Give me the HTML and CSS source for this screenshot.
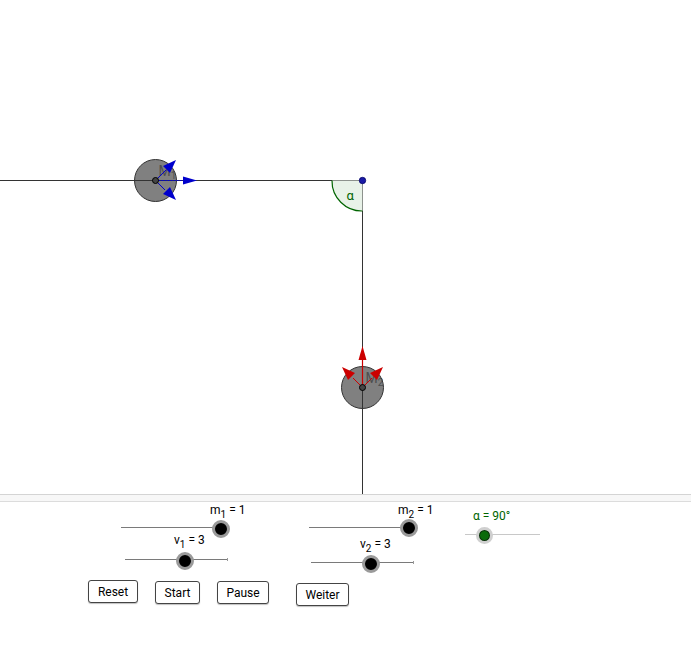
FILE: index.html
```html
<!DOCTYPE html>
<html>
<head>
<meta charset="utf-8">
<link rel="stylesheet" href="styles.css">
</head>
<body>
<div class="applet">
  <svg class="canvas" width="691" height="494" viewBox="0 0 691 494">
    <!-- lines -->
    <line x1="0" y1="180.5" x2="362" y2="180.5" stroke="#333" stroke-width="1"/>
    <line x1="362.5" y1="180" x2="362.5" y2="494" stroke="#333" stroke-width="1"/>
    <!-- angle -->
    <path d="M332,180.5 A30,30 0 0 0 362.5,211 L362.5,180.5 Z" fill="#e8f2e8" stroke="none"/>
    <path d="M332,180.5 A30,30 0 0 0 362.5,211" fill="none" stroke="#006400" stroke-width="1.2"/>
    <text x="346.5" y="200" class="alpha-lbl">α</text>
    <!-- ball M1 -->
    <circle cx="155.5" cy="180.5" r="21" fill="#808080" stroke="#333" stroke-width="1"/>
    <line x1="0" y1="180.5" x2="176" y2="180.5" stroke="#333" stroke-width="1"/>
    <text x="158.5" y="176" class="mlbl">M<tspan dy="3" font-size="10">1</tspan></text>
    <!-- blue vectors -->
    <line x1="155.5" y1="180.5" x2="186" y2="180.5" stroke="#0000cc" stroke-width="1.2" stroke-dasharray="2,1"/>
    <polygon points="197,180.5 183,176.5 183,184.5" fill="#0000cc"/>
    <line x1="155.5" y1="180.5" x2="166" y2="170" stroke="#0000cc" stroke-width="1"/>
    <polygon points="176,160 163,166 170,173" fill="#0000cc"/>
    <line x1="155.5" y1="180.5" x2="165" y2="190" stroke="#0000cc" stroke-width="1"/>
    <polygon points="176,200 163,194 170,187" fill="#0000cc"/>
    <circle cx="155.5" cy="180.5" r="3" fill="#444" stroke="#000" stroke-width="1"/>
    <!-- ball M2 -->
    <circle cx="362.5" cy="387.5" r="21" fill="#808080" stroke="#333" stroke-width="1"/>
    <line x1="362.5" y1="346" x2="362.5" y2="494" stroke="#333" stroke-width="1"/>
    <text x="365.5" y="383" class="mlbl">M<tspan dy="3" font-size="10">2</tspan></text>
    <!-- red vectors -->
    <line x1="362.5" y1="387.5" x2="362.5" y2="358" stroke="#cc0000" stroke-width="1.2"/>
    <polygon points="362.5,346 358.5,360 366.5,360" fill="#cc0000"/>
    <line x1="362.5" y1="387.5" x2="353" y2="378" stroke="#cc0000" stroke-width="1"/>
    <polygon points="342,367 348,380 355,373" fill="#cc0000"/>
    <line x1="362.5" y1="387.5" x2="372" y2="378" stroke="#cc0000" stroke-width="1"/>
    <polygon points="383,367 377,380 370,373" fill="#cc0000"/>
    <circle cx="362.5" cy="387.5" r="3" fill="#444" stroke="#000" stroke-width="1"/>
    <!-- point -->
    <circle cx="362.5" cy="180.5" r="3.2" fill="#1a1aa6" stroke="#000066" stroke-width="0.8"/>
  </svg>
  <div class="separator"></div>
  <div class="panel">
    <div class="slider s-m1">
      <span class="lbl">m<sub>1</sub> = 1</span>
      <div class="track"></div>
      <div class="knob"></div>
    </div>
    <div class="slider s-v1">
      <span class="lbl">v<sub>1</sub> = 3</span>
      <div class="track tick"></div>
      <div class="knob"></div>
    </div>
    <div class="slider s-m2">
      <span class="lbl">m<sub>2</sub> = 1</span>
      <div class="track"></div>
      <div class="knob"></div>
    </div>
    <div class="slider s-v2">
      <span class="lbl">v<sub>2</sub> = 3</span>
      <div class="track tick"></div>
      <div class="knob"></div>
    </div>
    <div class="slider s-a">
      <span class="lbl green">α = 90°</span>
      <div class="track light"></div>
      <div class="knob gknob"></div>
    </div>
    <button class="btn b-reset">Reset</button>
    <button class="btn b-start">Start</button>
    <button class="btn b-pause">Pause</button>
    <button class="btn b-weiter">Weiter</button>
  </div>
</div>
</body>
</html>
```
FILE: styles.css
```css
html, body {
  margin: 0;
  padding: 0;
  background: #fff;
  font-family: Roboto, "Liberation Sans", sans-serif;
}
.applet {
  width: 691px;
}
.canvas {
  display: block;
}
.alpha-lbl {
  font-family: Roboto, "Liberation Sans", sans-serif;
  font-size: 13px;
  fill: #006400;
}
.mlbl {
  font-family: Roboto, "Liberation Sans", sans-serif;
  font-size: 14px;
  fill: #3a3a3a;
  opacity: 0.7;
}
.separator {
  height: 6px;
  background: #f7f7f7;
  border-top: 1px solid #d4d4d4;
  border-bottom: 1px solid #dcdcdc;
}
.panel {
  position: relative;
  height: 160px;
}
.slider {
  position: absolute;
}
.lbl {
  position: absolute;
  font-size: 12px;
  color: #000;
  white-space: nowrap;
  line-height: 14px;
}
.lbl sub {
  font-size: 10px;
  vertical-align: -4px;
  line-height: 0;
}
.lbl.green {
  color: #006400;
}
.track {
  position: absolute;
  height: 1px;
  background: #7a7a7a;
}
.track.tick::after {
  content: "";
  position: absolute;
  right: -1px;
  top: -1px;
  width: 1px;
  height: 3px;
  background: #999;
}
.track.light {
  background: #c8c8c8;
}
.knob {
  position: absolute;
  width: 12px;
  height: 12px;
  border-radius: 50%;
  background: #000;
  border: 3px solid #9a9a9a;
  box-sizing: content-box;
}
.gknob {
  width: 11px;
  height: 11px;
  background: #0b6b0b;
  border: 3px solid #cfcfcf;
  box-shadow: inset 0 0 0 1px #0a2a0a;
}
/* slider positions (panel origin at page y=502) */
.s-m1 { left: 121px; top: 0; }
.s-m1 .lbl { left: 89px; top: 1px; }
.s-m1 .track { left: 0; top: 25px; width: 100px; }
.s-m1 .knob { left: 91px; top: 18px; }

.s-v1 { left: 125px; top: 0; }
.s-v1 .lbl { left: 49px; top: 31px; }
.s-v1 .track { left: 0; top: 57px; width: 102px; }
.s-v1 .knob { left: 51px; top: 50px; }

.s-m2 { left: 309px; top: 0; }
.s-m2 .lbl { left: 89px; top: 1px; }
.s-m2 .track { left: 0; top: 25px; width: 100px; }
.s-m2 .knob { left: 91px; top: 17px; }

.s-v2 { left: 311px; top: 0; }
.s-v2 .lbl { left: 49px; top: 35px; }
.s-v2 .track { left: 0; top: 60px; width: 102px; }
.s-v2 .knob { left: 51px; top: 53px; }

.s-a { left: 465px; top: 0; }
.s-a .lbl { left: 8px; top: 7px; }
.s-a .track { left: 0; top: 32px; width: 75px; }
.s-a .knob { left: 11px; top: 25px; }

.btn {
  position: absolute;
  font-family: Roboto, "Liberation Sans", sans-serif;
  font-size: 12px;
  color: #000;
  background: #fff;
  border: 1px solid #444;
  border-radius: 3px;
  padding: 0;
  height: 23px;
  box-shadow: 0 1px 1px rgba(0,0,0,0.25);
}
.b-reset { left: 88px; top: 78px; width: 50px; }
.b-start { left: 155px; top: 79px; width: 45px; }
.b-pause { left: 217px; top: 79px; width: 52px; }
.b-weiter { left: 296px; top: 81px; width: 53px; }
```
